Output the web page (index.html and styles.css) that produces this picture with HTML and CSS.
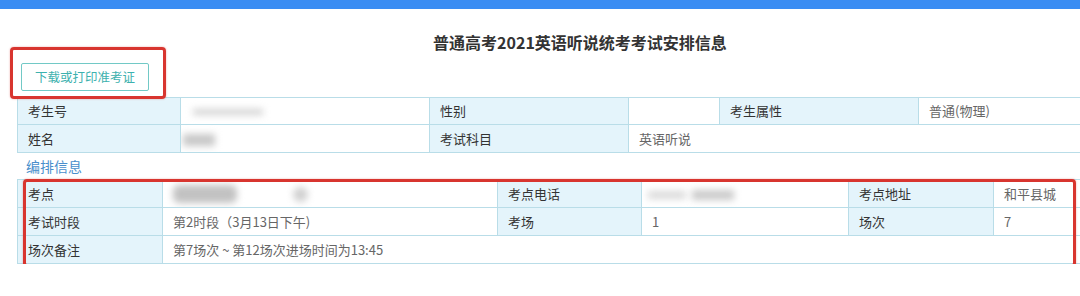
FILE: index.html
```html
<!DOCTYPE html>
<html lang="zh-CN">
<head>
<meta charset="utf-8">
<title>普通高考2021英语听说统考考试安排信息</title>
<link rel="stylesheet" href="styles.css">
</head>
<body>
<div class="topbar"></div>
<div class="page">
  <h1 class="title">普通高考2021英语听说统考考试安排信息</h1>
  <div class="actions">
    <button class="btn" type="button">下载或打印准考证</button>
    <div class="mark mark-btn"></div>
  </div>
  <table class="info t1">
    <colgroup>
      <col class="a1"><col class="a2"><col class="a3"><col class="a4"><col class="a5"><col class="a6">
    </colgroup>
    <tr>
      <td class="lab">考生号</td>
      <td class="val"><span class="blur b-num"></span></td>
      <td class="lab">性别</td>
      <td class="val"></td>
      <td class="lab">考生属性</td>
      <td class="val">普通(物理)</td>
    </tr>
    <tr>
      <td class="lab">姓名</td>
      <td class="val"><span class="blur b-name"></span></td>
      <td class="lab">考试科目</td>
      <td class="val" colspan="3">英语听说</td>
    </tr>
  </table>
  <div class="section">编排信息</div>
  <div class="arrange">
    <table class="info t2">
      <colgroup>
        <col class="b1"><col class="b2"><col class="b3"><col class="b4"><col class="b5"><col class="b6">
      </colgroup>
      <tr>
        <td class="lab">考点</td>
        <td class="val"><span class="blur b-site"></span><span class="blur b-dot"></span></td>
        <td class="lab">考点电话</td>
        <td class="val"><span class="blur b-tel1"></span><span class="blur b-tel2"></span></td>
        <td class="lab">考点地址</td>
        <td class="val">和平县城</td>
      </tr>
      <tr>
        <td class="lab">考试时段</td>
        <td class="val">第2时段（3月13日下午)</td>
        <td class="lab">考场</td>
        <td class="val">1</td>
        <td class="lab">场次</td>
        <td class="val">7</td>
      </tr>
      <tr>
        <td class="lab">场次备注</td>
        <td class="val" colspan="5">第7场次 ~ 第12场次进场时间为13:45</td>
      </tr>
    </table>
    <div class="mark mark-table"></div>
  </div>
</div>
</body>
</html>
```
FILE: styles.css
```css
html, body {
  margin: 0;
  padding: 0;
  background: #fff;
  overflow: hidden;
}
body {
  font-family: "Noto Sans CJK SC", "Noto Sans", sans-serif;
  color: #333;
}
.topbar {
  height: 9px;
  background: #3a8df3;
}
.page {
  position: relative;
  margin-left: 17px;
  width: 1126px;
}
.title {
  margin: 22px 0 0;
  font-size: 16px;
  line-height: 22px;
  font-weight: bold;
  text-align: center;
  color: #333;
}
.actions {
  position: relative;
  margin-top: 10px;
  padding-left: 4px;
  height: 28px;
}
.btn {
  box-sizing: border-box;
  width: 128px;
  height: 28px;
  padding: 0;
  border: 1px solid #72c9c6;
  border-radius: 2px;
  background: #fff;
  color: #3db1ae;
  font-family: inherit;
  font-size: 12.5px;
  line-height: 26px;
}
.mark {
  position: absolute;
  box-sizing: border-box;
  border: 3px solid #d8352f;
  border-radius: 4px;
  box-shadow: 0 0 2px rgba(216, 53, 47, 0.45);
  pointer-events: none;
}
.mark-btn {
  left: -7px;
  top: -16px;
  width: 156px;
  height: 52px;
}
.info {
  border-collapse: collapse;
  table-layout: fixed;
  width: 1126px;
  font-size: 13px;
}
.info td {
  border: 1px solid #b9dde8;
  height: 27px;
  padding: 0 10px;
  line-height: 18px;
  white-space: nowrap;
  overflow: hidden;
  vertical-align: middle;
}
.t1 {
  margin-top: 6px;
}
.t1 tr:first-child td {
  height: 26px;
}
.lab {
  background: #e4f4fb;
  color: #333;
}
.val {
  background: #fff;
  color: #666;
}
.a1 { width: 163px; }
.a2 { width: 249px; }
.a3 { width: 199px; }
.a4 { width: 91px; }
.a5 { width: 199px; }
.a6 { width: 225px; }
.b1 { width: 145px; }
.b2 { width: 335px; }
.b3 { width: 144px; }
.b4 { width: 207px; }
.b5 { width: 145px; }
.b6 { width: 150px; }
.section {
  margin-top: 2px;
  padding-left: 9px;
  font-size: 14px;
  line-height: 22px;
  color: #4a8fcc;
}
.arrange {
  position: relative;
  margin-top: 2px;
}
.mark-table {
  left: 6px;
  top: 0;
  width: 1053px;
  height: 88px;
}
.blur {
  display: inline-block;
  vertical-align: middle;
  background: #c8c8c8;
  filter: blur(3.5px);
}
.b-num {
  width: 70px;
  height: 6px;
  margin-left: 2px;
  background: #d2d2d2;
}
.b-name {
  width: 32px;
  height: 12px;
  margin-left: -8px;
}
.b-site {
  width: 64px;
  height: 18px;
  border-radius: 6px;
  background: #c2c2c2;
}
.b-dot {
  width: 15px;
  height: 15px;
  margin-left: 56px;
  border-radius: 50%;
  background: #d0d0d0;
}
.b-tel1 {
  width: 38px;
  height: 8px;
  margin-left: -4px;
  background: #dadada;
}
.b-tel2 {
  width: 42px;
  height: 10px;
  margin-left: 6px;
  background: #cacaca;
}
```
